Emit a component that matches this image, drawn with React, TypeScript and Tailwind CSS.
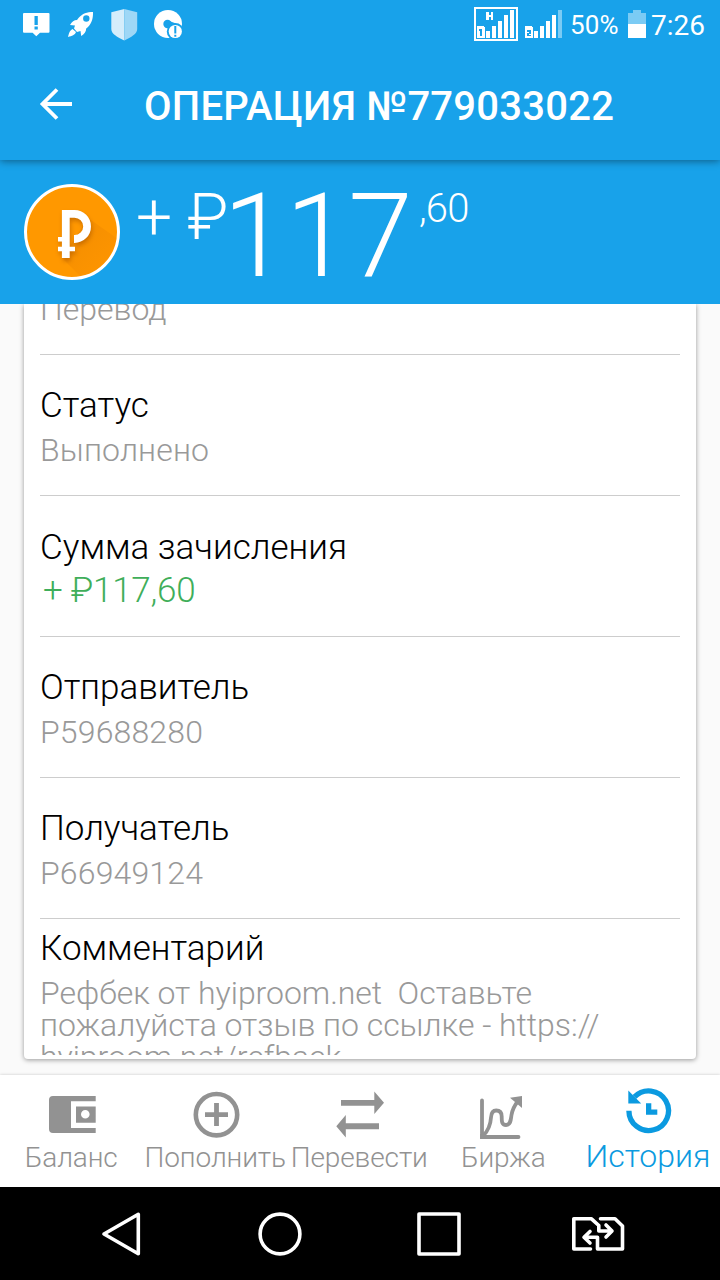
import type { ReactNode } from "react";

interface DetailRow {
  label: string;
  value: string;
  positive?: boolean;
}

const rows: DetailRow[] = [
  { label: "Статус", value: "Выполнено" },
  { label: "Сумма зачисления", value: "+ ₽117,60", positive: true },
  { label: "Отправитель", value: "P59688280" },
  { label: "Получатель", value: "P66949124" },
];

const comment =
  "Рефбек от hyiproom.net  Оставьте\nпожалуйста отзыв по ссылке - https://\nhyiproom.net/refback";

function NotificationIcons() {
  return (
    <svg width="200" height="48" viewBox="0 0 200 48" fill="#fff">
      {/* alert bubble */}
      <path d="M24 13h24.500q1 0 1 1v17.700q0 1-1 1H40l-3.700 3.600-3.700-3.600H24q-1 0-1-1V14q0-1 1-1z" />
      <path d="M34.500 16h3.300v9h-3.300zM34.500 26.500h3.300v3h-3.300z" fill="#18a2ea" />
      {/* rocket */}
      <path
        fillRule="evenodd"
        d="M93 12c-6 0-10.500 1.500-14.500 6l-1.500 2c-3 0-5 1.500-7 5l5 .5-1 3 3 3.500 3.500-1 .7 5c3-2 5-4 5-7.500l1.800-1.500c4-4 5.200-9 5-15zM86.300 15.300a3.200 3.200 0 1 1 0 6.400 3.200 3.200 0 0 1 0-6.400z"
      />
      <path d="M72.500 29l3.500 3c-1 3-4 3.800-8 5 1-3.500 1.500-6.500 4.500-8z" />
      {/* shield */}
      <path d="M124.300 9l-13 3.300V29c0 5 6 8 13 11.500z" fill="#d5edfb" />
      <path d="M124.300 9l12.900 3.300V29c0 5-6 8-12.900 11.500z" fill="#9ed7f6" />
      {/* disc with badge */}
      <circle cx="168" cy="24" r="14" />
      <circle cx="167.500" cy="24" r="4.200" fill="#18a2ea" />
      <path d="M168 20.500l8 3-6 5z" fill="#18a2ea" />
      <circle cx="175.300" cy="31.500" r="8.500" fill="#18a2ea" />
      <circle cx="175.300" cy="31.500" r="6.600" />
      <path d="M174.300 26h2v7.500h-2zM174.300 34.700h2v2h-2z" fill="#18a2ea" />
    </svg>
  );
}

function SignalIcons() {
  return (
    <svg width="92" height="48" viewBox="473 0 92 48" fill="#fff" shapeRendering="crispEdges">
      <rect x="475" y="8" width="42" height="32" fill="none" stroke="#fff" strokeWidth="2" />
      <path d="M486 12h3v3h2v-3h2v8h-2v-3h-2v3h-3z" />
      <path d="M477 26h6l2 2v10h-8z" />
      <path d="M479 29h3v7h-2v-5h-1z" fill="#18a2ea" />
      <path d="M486 31h4v7h-4zM492 26h4v12h-4zM498 21h4v17h-4zM504 15h4v23h-4zM510 10h4v28h-4z" />
      <path d="M525 26h6l2 2v10h-8z" />
      <path d="M527 30h4v4h-2v1h2v1h-4v-3h2v-1h-2z" fill="#18a2ea" />
      <path d="M534 31h4v7h-4zM540 26h4v12h-4zM546 21h4v17h-4zM552 15h4v23h-4z" />
      <path d="M558 10h4v28h-4z" fill="#7bcbf4" />
    </svg>
  );
}

function StatusBar() {
  return (
    <div className="flex h-12 items-center text-white">
      <NotificationIcons />
      <div className="ml-[273px]">
        <SignalIcons />
      </div>
      <span className="ml-[5px] w-[57px] pt-0.5 text-[26px] leading-8 tracking-[0.2px]">50%</span>
      <svg width="20" height="48" viewBox="627 0 20 48" shapeRendering="crispEdges">
        <path d="M633 10h8v3h5v11h-18V13h5z" fill="#7bcbf4" />
        <path d="M628 24h18v14h-18z" fill="#fff" />
      </svg>
      <span className="ml-1 pt-1 text-[28px] leading-8">7:26</span>
    </div>
  );
}

function CoinIcon() {
  return (
    <svg width="96" height="96" viewBox="24 184 96 96" className="shrink-0">
      <defs>
        <linearGradient id="fade" x1="0" y1="0" x2="1" y2="1">
          <stop offset="0" stopColor="#e07f00" stopOpacity="0.5" />
          <stop offset="1" stopColor="#ff9000" stopOpacity="0.3" />
        </linearGradient>
      </defs>
      <circle cx="72" cy="232" r="46.500" fill="#ff9800" />
      <path d="M88 218l30 21-14 28-23 10-19-19z" fill="url(#fade)" />
      <circle cx="72" cy="232" r="46.500" fill="none" stroke="#fff" strokeWidth="3" />
      <g className="drop-shadow-[1px_3px_2px_rgba(150,70,0,0.45)]">
        <path
          d="M65.800 258V213.800H74.500a12.600 12.600 0 0 1 0 25.200H74"
          fill="none"
          stroke="#fff"
          strokeWidth="7.800"
        />
        <path d="M58 237h5v4.500h-5zM58 246.700h17v4.500h-17z" fill="#fff" />
      </g>
    </svg>
  );
}

function WalletIcon() {
  return (
    <svg width="48" height="48" viewBox="48 1091 48 48" fill="#929292">
      <path d="M53 1096h42.700v5.300H71v26.700h24.700v5H53q-4 0-4-4v-29q0-4 4-4z" />
      <path
        fillRule="evenodd"
        d="M76 1106.500h19.700v16.300H76zM85.300 1110a4.300 4.300 0 1 0 0 8.600 4.300 4.300 0 0 0 0-8.600z"
      />
    </svg>
  );
}

function AddIcon() {
  return (
    <svg width="48" height="48" viewBox="192 1091 48 48" fill="none" stroke="#929292">
      <circle cx="216.500" cy="1114.700" r="20.700" strokeWidth="4.600" />
      <path d="M205 1114.700h23M216.500 1103v23" strokeWidth="4.800" />
    </svg>
  );
}

function TransferIcon() {
  return (
    <svg width="48" height="48" viewBox="336 1091 48 48" fill="#929292">
      <path d="M341 1100h33.300v-8.500l9.700 11.200-9.700 11.300v-8.200H341z" />
      <path d="M379 1129.300h-33.200v8.200l-9.500-11.300 9.500-11.200v8.300H379z" />
    </svg>
  );
}

function ExchangeIcon() {
  return (
    <svg width="48" height="48" viewBox="480 1091 48 48" fill="none" stroke="#929292">
      <path d="M482 1100.500v36.500h36.500" strokeWidth="3.800" strokeLinecap="round" />
      <path d="M480.100 1134h4v4.900h-4z" fill="#929292" stroke="none" />
      <path
        d="M483 1136c5-5 7.500-10 8-18.500.3-5 2-7 5.200-7s5.500 2 5.500 6c0 4.500-.2 8.500 4.300 8.500 5 0 4.800-6 5.500-10 .8-5 3-9.500 6.500-14"
        strokeWidth="3.800"
      />
      <path d="M510 1097.800l12-1.800v12z" fill="#929292" stroke="none" />
    </svg>
  );
}

function HistoryIcon() {
  return (
    <svg width="48" height="48" viewBox="624 1087 48 48" fill="#0b9ae0">
      <path
        d="M628.900 1110.700a19.800 19.800 0 1 0 5.600-13.800"
        fill="none"
        stroke="#0b9ae0"
        strokeWidth="5.300"
      />
      <path d="M628.300 1090.500v13h12.900z" />
      <path d="M646 1103.300h5.300v6.200h6v5.300H646z" />
    </svg>
  );
}

function Tab({ icon, title, active }: { icon: ReactNode; title: string; active?: boolean }) {
  return (
    <button
      className={`flex w-36 flex-col items-center whitespace-nowrap font-light ${
        active ? "pt-3 text-[32px] text-[#0b9ae0]" : "pt-4 text-[28px] tracking-[-0.1px] text-[#929292]"
      }`}
    >
      {icon}
      <span className={active ? "leading-[42px]" : "mr-[1.5px] mt-[3px] leading-8"}>{title}</span>
    </button>
  );
}

export default function App() {
  return (
    <div className="flex h-[1280px] w-[720px] flex-col overflow-hidden bg-[#fafafa] font-['Roboto',sans-serif]">
      <header className="relative z-10 h-40 shrink-0 bg-[#18a2ea] text-white shadow-[0_1px_8px_rgba(0,0,0,0.45)]">
        <StatusBar />
        <div className="flex h-28 items-center">
          <svg width="34" height="34" viewBox="0 0 34 34" className="ml-[39px]" fill="none" stroke="#fff" strokeWidth="3.800">
            <path d="M33 17H4M18 2.500L3.500 17 18 31.500" />
          </svg>
          <h1 className="ml-[71px] pt-1.5 text-[40px] font-medium leading-[48px] tracking-[0.24px]">
            ОПЕРАЦИЯ №779033022
          </h1>
        </div>
      </header>

      <section className="flex h-36 shrink-0 items-start bg-[#18a2ea] pl-6 pt-6 font-light text-white">
        <CoinIcon />
        <span className="ml-4 mt-[-4px] whitespace-pre text-[64px] leading-[76px] tracking-[-0.3px]">+ ₽</span>
        <span className="ml-[-5px] mt-[-16px] text-[116px] leading-[136px] tracking-[-1.7px]">117</span>
        <span className="ml-2 mt-px text-[40px] leading-[48px] tracking-[-0.8px]">,60</span>
      </section>

      <main className="h-[771px] shrink-0 overflow-hidden px-6">
        <div className="h-[755px] overflow-hidden rounded-b bg-white px-4 shadow-[0_1px_5px_rgba(0,0,0,0.4)]">
          <div className="flex h-[51px] items-end border-b border-[#cdcdcd] pb-[26px]">
            <span className="text-[32px] font-light leading-[38px] text-[#999]">Перевод</span>
          </div>
          {rows.map((row) => (
            <div
              key={row.label}
              className={`h-[141px] border-b border-[#cdcdcd] font-light ${row.positive ? "pt-[31px]" : "pt-[30px]"}`}
            >
              <div className="text-[35px] leading-[42px] text-black">{row.label}</div>
              {row.positive ? (
                <div className="ml-[3px] mt-px text-[35px] leading-[42px] tracking-[-0.25px] text-[#3fae5a]">
                  {row.value}
                </div>
              ) : (
                <div className="mt-1 text-[32px] leading-[38px] tracking-[0.15px] text-[#999]">{row.value}</div>
              )}
            </div>
          ))}
          <div className="pt-[9px] font-light">
            <div className="text-[35px] leading-[42px] text-black">Комментарий</div>
            <p className="mt-[7px] h-[78px] overflow-hidden whitespace-pre text-[32px] leading-8 tracking-[-0.04px] text-[#999]">
              {comment}
            </p>
          </div>
        </div>
      </main>

      <nav className="relative flex h-28 shrink-0 items-start bg-white shadow-[0_0_3px_rgba(0,0,0,0.2)]">
        <Tab icon={<WalletIcon />} title="Баланс" />
        <Tab icon={<AddIcon />} title="Пополнить" />
        <Tab icon={<TransferIcon />} title="Перевести" />
        <Tab icon={<ExchangeIcon />} title="Биржа" />
        <Tab icon={<HistoryIcon />} title="История" active />
      </nav>

      <footer className="relative h-[93px] shrink-0 bg-black">
        <svg width="720" height="93" viewBox="0 1187 720 93" fill="none" stroke="#fff" strokeWidth="3.600" strokeLinejoin="round">
          <path d="M104 1234l34.300-19.700v39.400z" />
          <circle cx="280" cy="1234" r="19.900" />
          <path d="M419 1214h40v40h-40z" />
          <path d="M590.500 1249h-16.700v-30.200h17.700l7.300 6.700v5.500H611M606 1225l6 6-6 6" strokeLinecap="round" />
          <path d="M600.500 1218.800H615l7.500 7.200v23h-25v-11.800H585M590 1231.500l-6 5.700 6 5.800" strokeLinecap="round" />
        </svg>
      </footer>
    </div>
  );
}
